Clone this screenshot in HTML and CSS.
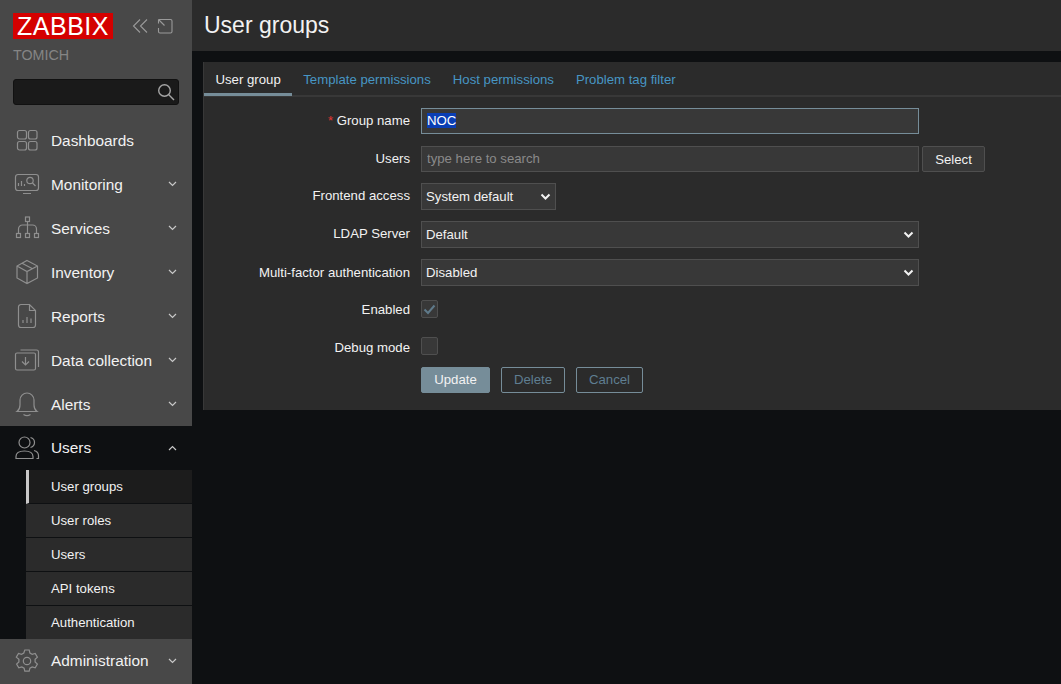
FILE: index.html
```html
<!DOCTYPE html>
<html lang="en">
<head>
<meta charset="utf-8">
<title>User groups</title>
<link rel="stylesheet" href="styles.css">
</head>
<body>
<div class="app">
  <aside class="sidebar">
    <div class="brand">
      <div class="logo">ZABBIX</div>
      <svg class="brand-icon" width="16" height="16" viewBox="0 0 16 16"><path d="M8 1.500 1.500 8 8 14.500M15 1.500 8.500 8l6.500 6.500"/></svg>
      <svg class="brand-icon brand-icon-last" width="16" height="16" viewBox="0 0 16 16"><path d="M5.500 1.500h8a1.500 1.500 0 0 1 1.500 1.500v10.500a1.500 1.500 0 0 1-1.500 1.500H3a1.500 1.500 0 0 1-1.500-1.500V10M1.500 1.500 7.500 7.500M1.500 1.500H5.500M1.500 1.500V5.500"/></svg>
    </div>
    <div class="server">TOMICH</div>
    <div class="search">
      <svg width="18" height="18" viewBox="0 0 18 18"><circle cx="7.500" cy="7.500" r="5.800"/><path d="m11.800 11.800 5.200 5.200"/></svg>
    </div>
    <nav class="menu">
      <a class="item"><svg class="ico" viewBox="0 0 26 26"><rect x="3.500" y="3.500" width="9" height="8.500" rx="2"/><rect x="14.500" y="3.500" width="8.500" height="8.500" rx="2"/><rect x="3.500" y="14.500" width="9" height="8.500" rx="2"/><rect x="14.500" y="14.500" width="8.500" height="8.500" rx="2"/></svg><span class="lbl lbl-low">Dashboards</span></a>
      <a class="item"><svg class="ico" viewBox="0 0 26 26"><path d="M22 3.500H4A2.500 2.500 0 0 0 1.500 6v11A2.500 2.500 0 0 0 4 19.500h18a2.500 2.500 0 0 0 2.500-2.500V6A2.500 2.500 0 0 0 22 3.500ZM9 22.500h8M4.500 15v-3M7.500 15v-5M10.500 15v-2"/><circle cx="16" cy="9.500" r="3.200"/><path d="m18.500 12 3 3"/></svg><span class="lbl lbl-low">Monitoring</span><svg class="chev" width="9" height="6" viewBox="0 0 9 6"><path d="m1 1 3.500 3.500L8 1"/></svg></a>
      <a class="item"><svg class="ico" viewBox="0 0 26 26"><rect x="11.500" y="2" width="4" height="4.500"/><path d="M13.500 6.500V18.500M4.500 18.500V14a4 4 0 0 1 4-4h10a4 4 0 0 1 4 4v4.500"/><rect x="2.500" y="18.500" width="4" height="4"/><rect x="11.500" y="18.500" width="4" height="4"/><rect x="20.500" y="18.500" width="4" height="4"/></svg><span class="lbl lbl-low">Services</span><svg class="chev" width="9" height="6" viewBox="0 0 9 6"><path d="m1 1 3.500 3.500L8 1"/></svg></a>
      <a class="item"><svg class="ico" viewBox="0 0 26 26"><path d="M13 1.500 23.500 7v12L13 24.500 3 19V7ZM3 7l10 5.500L23.500 7M13 12.500v12M8 4.300l10.500 5.500"/></svg><span class="lbl lbl-low">Inventory</span><svg class="chev" width="9" height="6" viewBox="0 0 9 6"><path d="m1 1 3.500 3.500L8 1"/></svg></a>
      <a class="item"><svg class="ico" viewBox="0 0 26 26"><path d="M15.500 1.500H7A2.500 2.500 0 0 0 4.500 4v18A2.500 2.500 0 0 0 7 24.500h12a2.500 2.500 0 0 0 2.500-2.500V7.500ZM15.500 1.500v6h6M9 20v-3M13 20v-6M17 20v-4.500"/></svg><span class="lbl lbl-low">Reports</span><svg class="chev" width="9" height="6" viewBox="0 0 9 6"><path d="m1 1 3.500 3.500L8 1"/></svg></a>
      <a class="item"><svg class="ico" viewBox="0 0 26 26"><rect x="1.500" y="6" width="20" height="17" rx="1.500"/><path d="M6.500 3h16a2 2 0 0 1 2 2v15M11.500 10v8M8 14.500l3.500 3.500 3.500-3.500"/></svg><span class="lbl lbl-low">Data collection</span><svg class="chev" width="9" height="6" viewBox="0 0 9 6"><path d="m1 1 3.500 3.500L8 1"/></svg></a>
      <a class="item"><svg class="ico" viewBox="0 0 26 26"><path d="M3 20.500c2-1.500 3-3 3-6.500V9a7 7 0 0 1 14 0v5c0 3.500 1 5 3 6.500ZM9.500 23.500c2 1.300 5 1.300 7 0"/></svg><span class="lbl lbl-low">Alerts</span><svg class="chev" width="9" height="6" viewBox="0 0 9 6"><path d="m1 1 3.500 3.500L8 1"/></svg></a>
      <a class="item item-open"><svg class="ico" viewBox="0 0 26 26"><circle cx="10.500" cy="7.500" r="5.500"/><path d="M2 23.500v-2c0-3.500 3-5.500 8.500-5.500s8.500 2 8.500 5.500v2ZM16.500 2.500c3 .8 4 3 4 5s-1 4.200-4 5M20 15.500c3 .8 4.500 2.500 4.500 5v3h-2"/></svg><span class="lbl">Users</span><svg class="chev" width="9" height="6" viewBox="0 0 9 6"><path d="m1 5 3.500-3.500L8 5"/></svg></a>
      <div class="submenu">
        <a class="sub sub-active">User groups</a>
        <a class="sub">User roles</a>
        <a class="sub">Users</a>
        <a class="sub">API tokens</a>
        <a class="sub">Authentication</a>
      </div>
      <a class="item"><svg class="ico" viewBox="0 0 26 26"><circle cx="13" cy="13" r="3.700"/><path d="M10.800 2h4.400l.7 3 2.300 1.300 3-.9 2.200 3.800-2.300 2.100v2.600l2.300 2.100-2.200 3.800-3-.9-2.300 1.300-.7 3h-4.400l-.7-3-2.300-1.300-3 .9-2.200-3.800 2.300-2.100v-2.600L2.300 9.200l2.200-3.800 3 .9 2.300-1.300Z"/></svg><span class="lbl">Administration</span><svg class="chev" width="9" height="6" viewBox="0 0 9 6"><path d="m1 1 3.500 3.500L8 1"/></svg></a>
    </nav>
  </aside>
  <main class="main">
    <header class="page-head"><h1>User groups</h1></header>
    <section class="panel">
      <div class="tabs">
        <a class="tab tab-active">User group</a>
        <a class="tab">Template permissions</a>
        <a class="tab">Host permissions</a>
        <a class="tab">Problem tag filter</a>
      </div>
      <form class="form">
        <label class="name r-group"><span class="req">*</span> Group name</label>
        <div class="field r-group"><div class="input input-focus w-full"><span class="selected">NOC</span></div></div>

        <label class="name r-users">Users</label>
        <div class="field r-users"><input class="input input-text w-full" placeholder="type here to search"><button type="button" class="btn-select">Select</button></div>

        <label class="name r-front">Frontend access</label>
        <div class="field r-front"><div class="select w-short">System default<svg width="11" height="8" viewBox="0 0 11 8"><path d="m1.500 1.500 4 4 4-4"/></svg></div></div>

        <label class="name r-ldap">LDAP Server</label>
        <div class="field r-ldap"><div class="select w-full">Default<svg width="11" height="8" viewBox="0 0 11 8"><path d="m1.500 1.500 4 4 4-4"/></svg></div></div>

        <label class="name r-mfa">Multi-factor authentication</label>
        <div class="field r-mfa"><div class="select w-full">Disabled<svg width="11" height="8" viewBox="0 0 11 8"><path d="m1.500 1.500 4 4 4-4"/></svg></div></div>

        <label class="name r-enabled">Enabled</label>
        <div class="field r-enabled"><div class="check"><svg width="13" height="11" viewBox="0 0 13 11"><path d="m1.500 5.500 3.500 3.500 6.500-7.500"/></svg></div></div>

        <label class="name r-debug">Debug mode</label>
        <div class="field r-debug"><div class="check"></div></div>

        <div class="actions">
          <button type="button" class="btn btn-primary">Update</button>
          <button type="button" class="btn">Delete</button>
          <button type="button" class="btn">Cancel</button>
        </div>
      </form>
    </section>
  </main>
</div>
</body>
</html>
```
FILE: styles.css
```css
* { box-sizing: border-box; }
html, body { margin: 0; height: 100%; }
body {
  background: #0e1012;
  color: #f2f2f2;
  font-family: "Liberation Sans", Arial, sans-serif;
  font-size: 13.2px;
  overflow: hidden;
}
.app { display: flex; width: 1061px; height: 684px; overflow: hidden; }

.sidebar {
  width: 192px;
  flex: none;
  background: #484848;
  display: flex;
  flex-direction: column;
}
.brand { display: flex; align-items: center; padding: 13px 0 0 13px; height: 39px; }
.logo {
  width: 100px;
  height: 26px;
  background: #d40000;
  color: #fff;
  font-size: 25px;
  line-height: 27px;
  text-align: center;
  letter-spacing: .5px;
}
.brand-icon { fill: none; stroke: #9a9a9a; stroke-width: 1.100; margin-left: 19px; }
.brand-icon-last { margin-left: 9px; }
.server { color: #858585; font-size: 14.300px; line-height: 16px; padding: 8px 0 0 13px; height: 40px; }
.search {
  margin-left: 13px;
  width: 166px;
  height: 26px;
  background: #1a1a1a;
  border: 1px solid #111;
  border-radius: 3px;
  display: flex;
  justify-content: flex-end;
  align-items: center;
  padding-right: 3px;
}
.search svg { fill: none; stroke: #a5a5a5; stroke-width: 1.400; }
.menu { margin-top: 13px; display: flex; flex-direction: column; }
.item {
  display: flex;
  align-items: center;
  height: 44px;
  padding-left: 14px;
  color: #f2f2f2;
  font-size: 15.400px;
}
.ico { width: 26px; height: 26px; flex: none; fill: none; stroke: #8f8f8f; stroke-width: 1.200; margin-right: 11px; }
.lbl { flex: 1; }
.lbl-low { padding-top: 2px; }
.chev { fill: none; stroke: #c8c8c8; stroke-width: 1.200; margin-right: 15px; }
.item-open { background: #0e1012; }
.submenu { background: #0e1012; padding-left: 26px; display: flex; flex-direction: column; }
.sub {
  height: 34px;
  line-height: 33px;
  padding-left: 25px;
  background: #2b2b2b;
  border-bottom: 1px solid #0e1012;
  color: #f2f2f2;
  font-size: 13.200px;
}
.sub:last-child { height: 33px; border-bottom: 0; }
.sub-active { background: #1c1c1c; padding-left: 22px; border-left: 3px solid #c8c8c8; }

.main { flex: 1; min-width: 0; display: flex; flex-direction: column; }
.page-head { height: 51px; background: #2b2b2b; display: flex; align-items: center; padding-left: 12px; }
.page-head h1 { margin: 0; font-size: 23px; font-weight: 400; color: #f2f2f2; }

.panel {
  margin: 11px 0 0 11px;
  height: 348px;
  background: #2b2b2b;
  border-left: 1px solid #383838;
}
.tabs { display: flex; height: 35px; border-bottom: 2px solid #383838; }
.tab {
  height: 34px;
  padding: 10px 11px 0;
  color: #4796c4;
  font-size: 13.200px;
  line-height: 16px;
}
.tab-active { color: #f2f2f2; border-bottom: 3px solid #768d99; padding-right: 11.500px; padding-left: 11.500px; }

.form {
  display: grid;
  grid-template-columns: 206px 1fr;
  grid-template-rows: 38px 37px 38px 38px 38px 40px 30px 26px;
  column-gap: 11px;
  padding-top: 11px;
}
.name { text-align: right; align-self: start; height: 16px; line-height: 16px; }
.req { color: #e33734; }
.field { display: flex; align-items: flex-start; }
.r-group { grid-row: 1; }
.r-users { grid-row: 2; }
.r-front { grid-row: 3; }
.r-ldap { grid-row: 4; }
.r-mfa { grid-row: 5; }
.r-enabled { grid-row: 6; }
.r-debug { grid-row: 7; }
.name.r-group { margin-top: 5px; }
.name.r-users { margin-top: 5px; }
.name.r-front { margin-top: 5px; }
.name.r-ldap { margin-top: 5px; }
.name.r-mfa { margin-top: 6px; }
.name.r-enabled { margin-top: 5px; }
.name.r-debug { margin-top: 3px; }
.field.r-enabled { padding-top: 3px; }

.input {
  height: 26px;
  background: #383838;
  border: 1px solid #4f4f4f;
  color: #f2f2f2;
  font: inherit;
  padding: 0 5px;
  line-height: 24px;
  outline: 0;
  border-radius: 0;
}
.input-text { padding-bottom: 2px; }
.input::placeholder { color: #8a8a8a; opacity: 1; }
.input-focus { border-color: #768d99; }
.selected { background: #0a3eb4; color: #fff; }
.w-full { width: 498px; }
.w-short { width: 135px; }
.btn-select {
  height: 26px;
  width: 63px;
  margin-left: 3px;
  background: #383838;
  border: 1px solid #4f4f4f;
  border-radius: 2px;
  color: #f2f2f2;
  font: inherit;
  padding: 0;
}
.select {
  height: 27px;
  background: #383838;
  border: 1px solid #4f4f4f;
  display: flex;
  align-items: center;
  justify-content: space-between;
  padding: 0 4px;
  color: #f2f2f2;
}
.select svg { fill: none; stroke: #f2f2f2; stroke-width: 2; }
.check {
  width: 17px;
  height: 18px;
  background: #383838;
  border: 1px solid #4f4f4f;
  border-radius: 2px;
  display: flex;
  align-items: center;
  justify-content: center;
}
.check svg { fill: none; stroke: #5f7a8a; stroke-width: 2; }
.actions { grid-column: 2; grid-row: 8; display: flex; gap: 11px; }
.btn {
  height: 26px;
  width: 64px;
  background: transparent;
  border: 1px solid #768d99;
  border-radius: 2px;
  color: #5f7e91;
  font: inherit;
  padding: 0 0 1px;
}
.btn:last-child { width: 67px; }
.btn-primary { width: 69px; background: #768d99; color: #f2f2f2; font-weight: 400; }
```
